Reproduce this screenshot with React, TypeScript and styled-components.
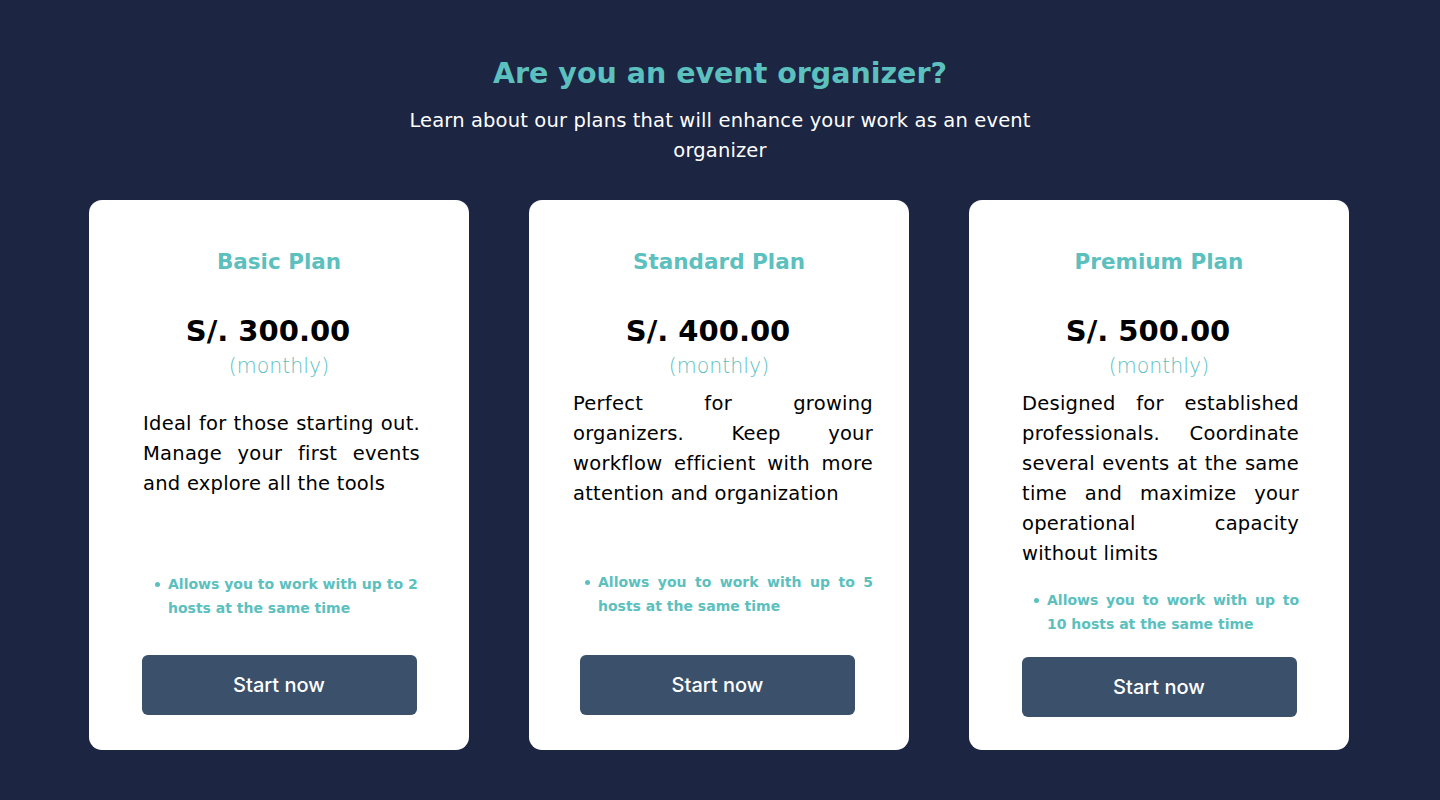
import React from "react";
import styled, { createGlobalStyle } from "styled-components";

const FONT = `"DejaVu Sans", "Open Sans", sans-serif`;

const Global = createGlobalStyle`
  * { box-sizing: border-box; }
  html, body { margin: 0; padding: 0; background: #1c2541; }
  body { font-family: ${FONT}; }
`;

const Page = styled.main`
  min-height: 800px;
  background: #1c2541;
  padding-top: 50px;
  display: flex;
  flex-direction: column;
  align-items: center;
`;

const Heading = styled.h1`
  margin: 0;
  font-family: ${FONT};
  font-weight: 700;
  font-size: 28.5px;
  line-height: 48px;
  color: #5bc0be;
  text-align: center;
`;

const Subtitle = styled.p`
  margin: 8px 0 0;
  width: 650px;
  font-family: ${FONT};
  font-weight: 400;
  font-size: 19.5px;
  letter-spacing: 0.15px;
  line-height: 30px;
  color: #ffffff;
  text-align: center;
`;

const Cards = styled.section`
  margin-top: 34px;
  padding-right: 2px;
  display: flex;
  gap: 60px;
  justify-content: center;
`;

const Card = styled.article<{ $bottom: number }>`
  width: 380px;
  height: 550px;
  background: #ffffff;
  border-radius: 13px;
  padding: 45px 0 ${(p) => p.$bottom}px;
  display: flex;
  flex-direction: column;
  align-items: center;
`;

const PlanName = styled.h2`
  margin: 0;
  font-family: ${FONT};
  font-weight: 700;
  font-size: 21.5px;
  line-height: 34px;
  color: #5bc0be;
`;

const Price = styled.div`
  margin-top: 32px;
  padding-right: 22px;
  font-family: ${FONT};
  font-weight: 700;
  font-size: 29px;
  line-height: 40px;
  color: #000000;
`;

const Period = styled.div`
  margin-top: 2px;
  font-family: ${FONT};
  font-weight: 300;
  font-size: 20.5px;
  line-height: 26px;
  color: #5bc0be;
`;

const Description = styled.p<{ $top: number; $width: number; $shift: number }>`
  margin: ${(p) => p.$top}px 0 0 ${(p) => p.$shift * 2}px;
  width: ${(p) => p.$width}px;
  font-family: ${FONT};
  font-size: 19.5px;
  letter-spacing: 0.25px;
  line-height: 30px;
  color: #000000;
`;

const Line = styled.span<{ $last?: boolean }>`
  display: block;
  text-align: justify;
  text-align-last: ${(p) => (p.$last ? "left" : "justify")};
  white-space: nowrap;
`;

const Features = styled.ul<{ $top: number; $width: number; $shift: number }>`
  margin: ${(p) => p.$top}px 0 0 ${(p) => p.$shift * 2}px;
  padding: 0;
  list-style: none;
  width: ${(p) => p.$width}px;
`;

const Feature = styled.li`
  display: flex;
  gap: 8px;
  padding-left: 12px;
  font-family: ${FONT};
  font-weight: 700;
  font-size: 14px;
  line-height: 24px;
  color: #5bc0be;
`;

const Dot = styled.span`
  flex: none;
  width: 5px;
  height: 5px;
  margin-top: 10px;
  border-radius: 50%;
  background: #5bc0be;
`;

const FeatureText = styled.span`
  flex: 1;
`;

const Button = styled.button<{ $shift: number }>`
  margin-top: auto;
  margin-right: ${(p) => -p.$shift * 2}px;
  width: 275px;
  height: 60px;
  border: none;
  border-radius: 6px;
  background: #3a506b;
  color: #ffffff;
  font-family: "Inter", sans-serif;
  font-weight: 500;
  font-size: 20px;
  cursor: pointer;
`;

type Plan = {
  name: string;
  price: string;
  desc: string[];
  feature: string[];
  featureJustify: boolean;
  descTop: number;
  featTop: number;
  bottom: number;
  width: number;
  shift: number;
  btnShift: number;
};

const plans: Plan[] = [
  {
    name: "Basic Plan",
    price: "S/. 300.00",
    desc: ["Ideal for those starting out.", "Manage your first events", "and explore all the tools"],
    feature: ["Allows you to work with up to 2", "hosts at the same time"],
    featureJustify: false,
    descTop: 30,
    featTop: 73,
    bottom: 35,
    width: 277,
    shift: 2.5,
    btnShift: 0,
  },
  {
    name: "Standard Plan",
    price: "S/. 400.00",
    desc: ["Perfect for growing", "organizers. Keep your", "workflow efficient with more", "attention and organization"],
    feature: ["Allows you to work with up to 5", "hosts at the same time"],
    featureJustify: true,
    descTop: 10,
    featTop: 61,
    bottom: 35,
    width: 300,
    shift: 4,
    btnShift: -1.5,
  },
  {
    name: "Premium Plan",
    price: "S/. 500.00",
    desc: [
      "Designed for established",
      "professionals. Coordinate",
      "several events at the same",
      "time and maximize your",
      "operational capacity",
      "without limits",
    ],
    feature: ["Allows you to work with up to", "10 hosts at the same time"],
    featureJustify: true,
    descTop: 10,
    featTop: 19,
    bottom: 33,
    width: 277,
    shift: 1.5,
    btnShift: 0,
  },
];

export default function App() {
  return (
    <>
      <Global />
      <Page>
        <Heading>Are you an event organizer?</Heading>
        <Subtitle>Learn about our plans that will enhance your work as an event organizer</Subtitle>
        <Cards>
          {plans.map((p) => (
            <Card key={p.name} $bottom={p.bottom}>
              <PlanName>{p.name}</PlanName>
              <Price>{p.price}</Price>
              <Period>(monthly)</Period>
              <Description $top={p.descTop} $width={p.width} $shift={p.shift}>
                {p.desc.map((l, i) => (
                  <Line key={i} $last={i === p.desc.length - 1}>
                    {l}
                  </Line>
                ))}
              </Description>
              <Features $top={p.featTop} $width={p.width} $shift={p.shift}>
                <Feature>
                  <Dot />
                  <FeatureText>
                    {p.feature.map((l, i) => (
                      <Line key={i} $last={!p.featureJustify || i === p.feature.length - 1}>
                        {l}
                      </Line>
                    ))}
                  </FeatureText>
                </Feature>
              </Features>
              <Button $shift={p.btnShift}>Start now</Button>
            </Card>
          ))}
        </Cards>
      </Page>
    </>
  );
}
